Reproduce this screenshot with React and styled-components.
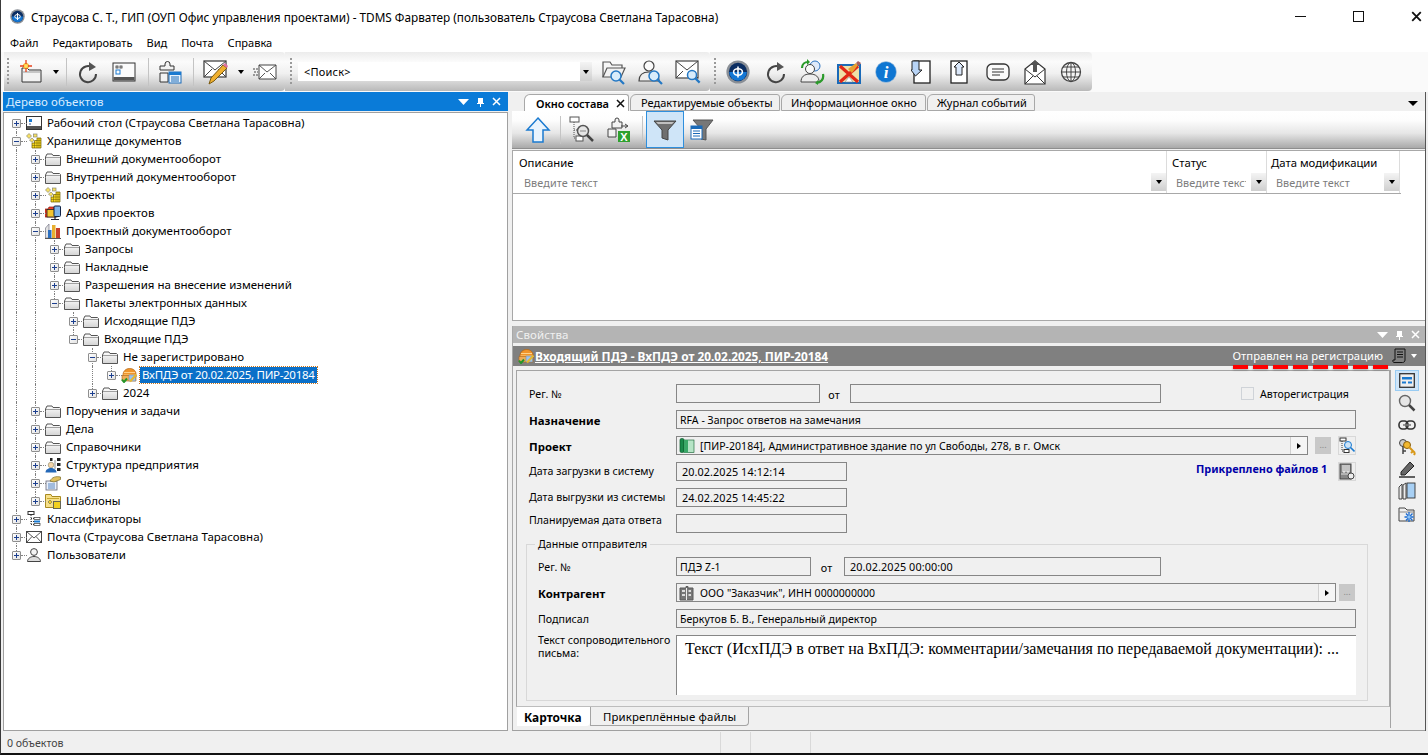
import React from 'react';
import styled, { createGlobalStyle } from 'styled-components';

const Global = createGlobalStyle`
  html, body { margin: 0; padding: 0; background: #fff; }
  * { box-sizing: border-box; }
  body { font-family: "Noto Sans", "Liberation Sans", sans-serif; font-size: 11.5px; color: #000; }
  fieldset { margin: 0; }
`;

const Win = styled.div`
  width: 1428px; height: 755px; background: #f6f6f6; display: flex; flex-direction: column;
  border-left: 1px solid #3a3a3a; border-bottom: 2px solid #111; overflow: hidden;
`;
const TitleBar = styled.div`
  height: 33px; background: #fff; display: flex; align-items: center; padding-left: 9px; flex: none; margin-right: -17px;
`;
const TitleText = styled.div`
  margin-left: 6px; font-size: 11.78px; flex: 1; white-space: nowrap;
`;
const WinBtn = styled.div`width: 58px; height: 33px; display: flex; align-items: center; justify-content: center;`;
const MenuBar = styled.div`height: 19px; background: #fff; display: flex; align-items: center; padding-left: 2px; flex: none;`;
const MenuItem = styled.div`padding: 0 7px; font-size: 11.05px; white-space: nowrap;`;
const ToolStrip = styled.div`height: 40px; display: flex; align-items: stretch; padding-left: 3px; flex: none; background: #fafafa;`;
const ToolBar = styled.div`
  display: flex; align-items: center; height: 39px; border-radius: 0 4px 4px 0;
  background: linear-gradient(#ececec 0%, #fbfbfb 25%, #f0f0f0 55%, #b9b9b9 100%);
`;
const Grip = styled.div`
  width: ${p => p.$w}px; height: 28px; flex: none; display: flex; justify-content: center;
  &::after { content: ""; width: 2px; height: 100%; background: repeating-linear-gradient(#9a9a9a 0 2px, transparent 2px 4px); }
`;
const Tool = styled.div`width: ${p => p.$w}px; height: 39px; flex: none; display: flex; align-items: center; justify-content: center;`;
const Sep = styled.div`
  width: ${p => p.$w}px; height: 28px; flex: none; display: flex; justify-content: center;
  &::after { content: ""; width: 1px; height: 100%; background: #c4c4c4; }
`;
const SearchBox = styled.div`
  width: 282px; height: 19px; background: #fff; flex: none; margin-left: 1px; padding-left: 6px; font-size: 11px;
  display: flex; align-items: center; letter-spacing: .2px;
`;
const DropBtn = styled.div`
  width: ${p => p.$w || 12}px; height: ${p => p.$h || 16}px; flex: none; display: flex; align-items: center; justify-content: center;
  background: ${p => p.$flat ? 'transparent' : 'linear-gradient(#f4f4f4,#cfcfcf)'};
  &::after {
    content: ""; border: ${p => p.$big ? 5 : 3}px solid transparent; border-top: ${p => p.$big ? 5 : 4}px solid ${p => p.$white ? '#fff' : '#000'}; border-bottom: 0;
  }
`;
const Main = styled.div`flex: 1; display: flex; min-height: 0; padding-left: 2px; background: #f0f0f0;`;
const LeftPanel = styled.div`width: 505px; flex: none; display: flex; flex-direction: column;`;
const DockHead = styled.div`
  height: ${p => p.$h}px; flex: none; display: flex; align-items: center; padding: 0 ${p => p.$pr || 7}px 0 3px;
  background: ${p => p.$bg}; color: ${p => p.$fg}; font-size: 11.5px; letter-spacing: .1px;
`;
const DockName = styled.div`flex: 1;`;
const DockBtns = styled.div`display: flex; align-items: center; gap: 7px;`;
const Tree = styled.div`
  flex: 1; background: #fff; border: 1px solid #a0a0a0; margin: 1px 0 0 0; padding: 1px 0 0 3px;
`;
const Row = styled.div`height: 18px; display: flex; align-items: center; white-space: nowrap;`;
const Indent = styled.div`
  width: 19px; height: 18px; flex: none; position: relative; display: flex; align-items: center; justify-content: center;
  &::before {
    content: ""; position: absolute; left: 9px; width: 0; border-left: 1px dotted #808080;
    top: ${p => p.$line === 'bottom' ? '9px' : '0'};
    bottom: ${p => p.$line === 'top' ? '9px' : '0'};
    display: ${p => p.$line ? 'block' : 'none'};
  }
  &::after {
    content: ""; position: absolute; left: 14px; top: 9px; width: 6px; border-top: 1px dotted #808080;
    display: ${p => p.$own ? 'block' : 'none'};
  }
`;
const Expander = styled.div`
  position: relative; z-index: 1; width: 9px; height: 9px; border: 1px solid #8f8f8f; border-radius: 1px; background: linear-gradient(135deg,#fff,#e2e2e2);
  display: flex; align-items: center; justify-content: center;
`;
const IconBox = styled.div`width: 16px; height: 16px; flex: none; display: flex; align-items: center; justify-content: center;`;
const NodeText = styled.div`
  margin-left: 3px; padding: 0 2px; height: 16px; line-height: 15px; font-size: 11.5px;
  ${p => p.$sel && 'background: #0a6fc8; color: #fff; outline: 1px dotted #c9741a; letter-spacing: -.28px;'}
`;
const Splitter = styled.div`width: 4px; flex: none;`;
const RightCol = styled.div`width: 914px; flex: none; display: flex; flex-direction: column; padding-top: 2px; border-right: 1px solid #555;`;
const TabBand = styled.div`height: 17px; flex: none; display: flex; align-items: flex-end; padding-left: 12px; padding-right: 6px;`;
const DocTab = styled.div`
  width: ${p => p.$w}px; height: 17px; flex: none; display: flex; align-items: center; padding-left: ${p => p.$pl}px; gap: 7px;
  font-size: 11px; white-space: nowrap; margin-right: 1px;
  background: ${p => p.$on ? '#fff' : '#f0f0f0'}; font-weight: ${p => p.$on ? 600 : 400}; letter-spacing: ${p => p.$on ? '-.1px' : '0'};
  border: 1px solid #a8a8a8; border-bottom: ${p => p.$on ? '0' : '1px solid #a8a8a8'}; border-radius: 6px 3px 0 0;
`;
const BandFill = styled.div`flex: 1;`;
const SubBar = styled.div`
  height: 38px; flex: none; display: flex; align-items: center; padding-left: 8px;
  background: linear-gradient(#fff 0%, #fdfdfd 25%, #e6e6e6 60%, #a9a9a9 100%); border-bottom: 1px solid #8e8e8e;
`;
const ActiveTool = styled.div`
  width: 38px; height: 37px; flex: none; display: flex; align-items: center; justify-content: center;
  background: #cfe5f8; border: 1px solid #2f8fdd;
`;
const GridBox = styled.div`height: 171px; flex: none; margin-top: 1px; background: #fff; border: 1px solid #a8a8a8; border-right: 0;`;
const GridHead = styled.div`display: flex; height: 43px; border-bottom: 1px solid #a8a8a8; width: 888px;`;
const GridCol = styled.div`
  width: ${p => p.$w}px; flex: none; border-right: 1px solid #dcdcdc; display: flex; flex-direction: column;
`;
const ColName = styled.div`height: 22px; padding: 5px 0 0 ${p => p.$pl}px; font-size: 11.3px; line-height: 14px;`;
const ColFilter = styled.div`height: 18px; display: flex; align-items: center; padding-left: ${p => p.$pl}px; color: #7c7c7c; font-size: 10.8px; letter-spacing: .1px;`;
const Placeholder = styled.div`flex: 1; overflow: hidden; white-space: nowrap; margin-right: 5px;`;
const VGap = styled.div`height: 5px; flex: none;`;
const Props = styled.div`flex: 1; display: flex; flex-direction: column; min-height: 0; border-bottom: 1px solid #a0a0a0; border-left: 1px solid #a8a8a8;`;
const ObjBar = styled.div`
  height: 20px; flex: none; margin-top: 3px; background: #808080; display: flex; align-items: center; color: #fff; padding: 0 3px 0 5px;
`;
const ObjName = styled.div`flex: 1; margin-left: 1px; font-weight: 700; text-decoration: underline; font-size: 11.85px;`;
const StateWrap = styled.div`position: relative; font-size: 11.25px; margin-right: 9px; height: 16px; line-height: 16px;`;
const RedDash = styled.div`
  position: absolute; left: 0; top: 17px; width: 155px; height: 4px;
  background: repeating-linear-gradient(90deg,#f00 0 15px,transparent 15px 20px);
  filter: drop-shadow(0 1px 1px rgba(0,0,0,.3));
`;
const PropBody = styled.div`flex: 1; display: flex; min-height: 0;`;
const CardCol = styled.div`width: 877px; flex: none; padding: 4px 0 0 3px; display: flex; flex-direction: column;`;
const Frame = styled.div`
  height: 337px; flex: none; border: 1px solid #a4a4a4; border-bottom: 1px solid #bdbdbd; padding: 13px 0 0 12px; display: flex; flex-direction: column; gap: 7px; overflow: hidden;
`;
const FRow = styled.div`height: ${p => p.$h || 19}px; flex: none; display: flex; align-items: ${p => p.$top ? 'flex-start' : 'center'};`;
const Label = styled.div`
  width: ${p => p.$w}px; flex: none; font-size: ${p => p.$b ? 11.4 : 10.65}px; line-height: 13px; font-weight: ${p => p.$b ? 700 : 400};
  padding-top: ${p => p.$pt || 0}px; margin-top: ${p => p.$mt || 0}px;
`;
const Field = styled.div`
  width: ${p => p.$w}px; height: 19px; flex: none; border: 1px solid #868686; background: #f0f0f0; display: flex; align-items: center;
  padding-left: ${p => p.$pl ?? 3}px; font-size: ${p => p.$num ? 10.8 : 10.5}px; white-space: nowrap; overflow: hidden; letter-spacing: ${p => p.$num ? '.1px' : '.05px'};
`;
const FieldText = styled.span`margin-left: 5px;`;
const Small = styled.div`width: ${p => p.$w}px; flex: none; text-align: center; font-size: 10.8px; padding-right: 2px; padding-top: 1px;`;
const Arrow = styled.div`
  width: 17px; height: 17px; flex: none; margin-left: auto; background: #f5f5f5; border-left: 1px solid #d0d0d0; display: flex; align-items: center; justify-content: center;
  &::after { content: ""; border: 3px solid transparent; border-left: 4px solid #000; border-right: 0; }
`;
const EllBtn = styled.div`
  width: 16px; height: 17px; flex: none; margin-left: ${p => p.$ml}px; background: #c8c8c8; color: #8a8a8a; font-size: 9px; line-height: 15px; text-align: center;
`;
const SquareBtn = styled.div`
  width: 18px; height: 19px; flex: none; margin-left: ${p => p.$ml}px; background: #efefef; border: 1px solid #d8d8d8; display: flex; align-items: center; justify-content: center;
`;
const Check = styled.div`width: 13px; height: 13px; flex: none; margin-left: 80px; border: 1px solid #cfd3d8; background: #f0f0f0;`;
const CheckText = styled.div`margin-left: 6px; font-size: 10.6px; padding-top: 1px;`;
const Attached = styled.div`width: 133px; flex: none; margin-left: 349px; color: #0000a8; font-weight: 700; font-size: 10.9px; white-space: nowrap; margin-top: -6px;`;
const Group = styled.fieldset`
  width: 842px; height: 163px; flex: none; margin: -2px 0 0 -3px; border: 1px solid #d8d8d8; padding: 7px 0 0 11px;
  display: flex; flex-direction: column; gap: 7px; min-width: 0;
`;
const Legend = styled.legend`margin-left: -3px; padding: 0 3px 0 3px; font-size: 10.65px; line-height: 12px;`;
const LetterBox = styled.div`
  width: 680px; height: 60px; flex: none; background: #fff; border: 1px solid #868686; border-bottom: 0; border-right: 0; padding: 4px 0 0 8px;
  font-family: "Liberation Serif", serif; font-size: 16.05px; line-height: 18px; white-space: nowrap; overflow: hidden;
`;
const CardTabs = styled.div`height: 19px; flex: none; display: flex; padding-left: 1px;`;
const CardTab = styled.div`
  width: ${p => p.$w}px; height: 19px; flex: none; display: flex; align-items: center; padding: 1px 0 0 ${p => p.$pl}px;
  background: ${p => p.$on ? '#fff' : '#f0f0f0'}; font-weight: ${p => p.$on ? 700 : 400}; font-size: ${p => p.$on ? 11.9 : 11.4}px; letter-spacing: ${p => p.$on ? 0 : '.15px'};
  border: ${p => p.$on ? '0' : '1px solid #a4a4a4'}; border-top: 0; border-radius: 0 0 4px 0;
`;
const Side = styled.div`flex: 1; border-left: 1px solid #a4a4a4; margin: 4px 0 2px 0; padding-left: 4px; display: flex; flex-direction: column; align-items: flex-start;`;
const SideBtn = styled.div`
  width: 24px; height: ${p => p.$h}px; flex: none; display: flex; align-items: center; justify-content: center;
  ${p => p.$on && 'background:#cfe5f8;border:1px solid #99ccf3;'}
`;
const Status = styled.div`height: 22px; flex: none; display: flex; align-items: center; font-size: 10.6px; color: #444; background: #f0f0f0; padding-top: 1px;`;
const StatusCell = styled.div`width: ${p => p.$w}px; height: 100%; flex: none; padding-left: 6px; display: flex; align-items: center; border-right: 1px solid #d9d9d9;`;

/* ---------- icons ---------- */
const Svg = styled.svg`display: block; flex: none;`;
const S = ({ w = 16, h = 16, vb, children }) => <Svg width={w} height={h} viewBox={vb || `0 0 ${w} ${h}`} fill="none">{children}</Svg>;
const Folder = () => <S><defs><linearGradient id="fg" x1="0" y1="0" x2="0" y2="1"><stop offset="0" stopColor="#fff" /><stop offset="1" stopColor="#d4d4d4" /></linearGradient></defs><path d="M.5 14.500V6l1.500-3h5l1 1.500h6.500l1 1v9z" fill="url(#fg)" stroke="#555" /><path d="M1 6.500h14" stroke="#a0a0a0" /></S>;
const Desktop = () => <S><rect x=".5" y="1.500" width="15" height="13" fill="#fdfdfd" stroke="#333" /><rect x="1" y="11" width="14" height="3" fill="#555" /><rect x="3" y="4" width="3" height="3" fill="#1a7ad0" /><rect x="3" y="8" width="2" height="2" fill="#9ac" /></S>;
const Storage = () => <S><path d="M6 15V10h2.500V7.500H11V5h4v10z" fill="#f7d820" stroke="#6a5c00" strokeWidth=".7" /><path d="M6 12.500h9M8.500 10h6.500M11 7.500h4M8.500 10v5M11 7.500V15M13 5v10" stroke="#6a5c00" strokeWidth=".5" /><path d="M3 .5l2.500 2.500L3 5.500.5 3z" fill="#f8e060" stroke="#887" strokeWidth=".7" /><path d="M6 5l2 2-2 2.500L3.500 7z" fill="#f8e060" stroke="#887" strokeWidth=".7" /><rect x="7.500" y="1" width="3.500" height="3" fill="#f8e060" stroke="#887" strokeWidth=".7" /></S>;
const Archive = () => <S><path d="M0 4h3l1-2h5v3h2v7H0z" fill="#f04028" stroke="#8a1a10" strokeWidth=".7" /><rect x="2" y="4.500" width="10" height="7.500" fill="#f4c430" stroke="#222" strokeWidth=".8" /><rect x="9" y="1" width="6.500" height="10.500" rx="1" fill="#7fb4ea" stroke="#124" /><path d="M6 14.500h8M10 11.500v3" stroke="#223" strokeWidth="1.200" /></S>;
const Bars = () => <S><path d="M.5 15V5L4 1v14z" fill="#e2e2e2" stroke="#778" strokeWidth=".7" /><rect x="3" y="7" width="3.500" height="8" fill="#2c6fc0" /><rect x="7" y="2" width="3.500" height="13" fill="#e8b030" /><rect x="11" y="5" width="4" height="10" fill="#c8402a" /><path d="M0 15.500h16" stroke="#555" /></S>;
const Pack = () => <S><path d="M2 8c0-4 3-6.500 6.500-6.500S15 3.500 15 7v3H2z" fill="#f0942a" stroke="#b06414" strokeWidth=".7" /><path d="M3 5.500h11M2.500 8h12.500" stroke="#ffd28a" /><path d="M1 8.500h14V14H1z" fill="#eeac58" stroke="#b06414" strokeWidth=".6" /><rect x="8" y="8" width="6.500" height="6" fill="#9cc4ee" stroke="#8a8a8a" strokeWidth=".6" /><path d="M15.500 7.500l-6.500 7" stroke="#e6b830" strokeWidth="2.200" /><path d="M1 12.500l2 2.500 3-3.500" stroke="#23962a" strokeWidth="2" /></S>;
const Org = () => <S><circle cx="6" cy="8" r="2.800" fill="#f3d3a8" stroke="#775" strokeWidth=".5" /><path d="M.5 15.500c0-3 3-4.500 5.500-4.500s5.500 1.500 5.500 4.500z" fill="#2468b8" /><path d="M5 1h2.500v3H5zM12 1h3.500v3H12zM12 6h3.500v3H12zM12 11h3.500v3H12z" fill="#222" /><path d="M10 3v9" stroke="#888" /></S>;
const Report = () => <S><rect x="1" y="6" width="11" height="9" fill="#e8f0fb" stroke="#667" strokeWidth=".8" /><path d="M3 9h7M3 11h7M3 13h7" stroke="#5a86c0" /><path d="M5 6c2-4 6-5 10.500-4v2.500L9 7z" fill="#e0c060" stroke="#7a6a20" strokeWidth=".7" /></S>;
const Templates = () => <S><path d="M.5 14.500V1.500h5.500l1 2h8.500v11z" fill="#f7e08a" stroke="#a88a20" /><path d="M2 5.500h12" stroke="#c8a830" /><rect x="8.500" y="8.500" width="7" height="7" fill="#f2d020" stroke="#665" /><path d="M5 7l2 2-2 2-2-2z" fill="#f5d020" stroke="#665" strokeWidth=".6" /></S>;
const Classif = () => <S><rect x="2" y=".5" width="6" height="3" fill="#fff" stroke="#333" /><path d="M5 4v10M5 7.500h3M5 10.500h3M5 13.500h3" stroke="#333" strokeDasharray="1 1" /><rect x="8" y="6.500" width="6" height="2" fill="#fff" stroke="#333" strokeWidth=".7" /><rect x="8" y="9.500" width="6" height="2" fill="#1a7ad0" /><rect x="8" y="12.500" width="6" height="2" fill="#fff" stroke="#333" strokeWidth=".7" /></S>;
const Mail = () => <S w={16} h={12}><rect x=".5" y=".5" width="15" height="11" fill="#fff" stroke="#444" /><path d="M.5.500L8 7l7.500-6.500M.5 11.500L6 5.500M15.500 11.500L10 5.500" stroke="#444" strokeWidth=".9" /></S>;
const User = () => <S><circle cx="8" cy="5" r="3.400" fill="#f4f4f4" stroke="#444" /><path d="M1.500 14.500c0-3 3-5 6.500-5s6.500 2 6.500 5z" fill="#ddd" stroke="#444" /></S>;
const Plus = () => <svg width="7" height="7" viewBox="0 0 7 7"><path d="M1 3.500h5M3.500 1v5" stroke="#1c3f8f" /></svg>;
const Minus = () => <svg width="7" height="7" viewBox="0 0 7 7"><path d="M1 3.500h5" stroke="#1c3f8f" /></svg>;
const Logo = ({ s = 15 }) => <S w={s} h={s} vb="0 0 30 30"><circle cx="15" cy="15" r="14.500" fill="#8a8f96" /><circle cx="15" cy="15" r="11.500" fill="#0b2e63" /><path d="M4 15a11 11 0 0 0 22 0z" fill="#1477d4" /><ellipse cx="15" cy="15" rx="5.500" ry="4" stroke="#fff" strokeWidth="2" /><path d="M15 8v14" stroke="#fff" strokeWidth="2" /></S>;
const Refresh = () => <S w={24} h={24}><path d="M16.500 7.500A8 8 0 1 0 20 14" stroke="#444" strokeWidth="2" /><path d="M13 2l7 5-7 4z" fill="#555" /></S>;
const NewFolder = () => <S w={24} h={24}><path d="M2 8h5l2 2h12v12H2z" fill="#f2f2f2" stroke="#333" /><path d="M2 12h19" stroke="#999" /><circle cx="6" cy="6" r="3" fill="#f5b020" /><path d="M6 0v12M0 6h12" stroke="#e8401a" strokeWidth="1.300" /><circle cx="6" cy="6" r="2" fill="#ffe060" /></S>;
const WindowIc = () => <S w={24} h={20}><rect x="1" y="1" width="22" height="18" fill="#fbfbfb" stroke="#333" /><rect x="1.500" y="15" width="21" height="3.500" fill="#555" /><rect x="4" y="4" width="2" height="2" stroke="#333" strokeWidth=".8" /><rect x="8" y="4" width="2" height="2" stroke="#333" strokeWidth=".8" /><rect x="4" y="8" width="4" height="4" stroke="#1a7ad0" /></S>;
const Puzzle = () => <S w={24} h={24}><path d="M2 6h5V4a2.500 2.500 0 0 1 5 0v2h4v4H2zM2 13h8v9H2z" fill="#f2f2f2" stroke="#333" /><rect x="11" y="12" width="12" height="11" fill="#e8f2fb" stroke="#1a6ab8" /><rect x="11" y="12" width="12" height="3" fill="#1a7ad0" /><path d="M13 17h8M13 19h8M13 21h8" stroke="#1a6ab8" /></S>;
const MailEdit = () => <S w={26} h={26}><rect x="1" y="2" width="22" height="16" fill="#fff" stroke="#444" strokeWidth="1.300" /><path d="M1 2l11 9 11-9M1 18l8-8M23 18l-8-8" stroke="#444" /><path d="M6 25l2-6L20 6l4 3L11 22z" fill="#f0b030" stroke="#7a5a10" /><path d="M20 6l2-2 3 3-1 2z" fill="#e070a0" /></S>;
const MailSend = () => <S w={24} h={18}><path d="M6 2h17v14H6z" fill="#fff" stroke="#444" /><path d="M6 2l8 7 9-7M6 16l6-6M23 16l-6-6" stroke="#444" strokeWidth=".9" /><path d="M0 6h5M1 9h4M0 12h5" stroke="#444" strokeDasharray="2 1" /></S>;
const Lens = ({ x, y, r = 5 }) => <g><circle cx={x} cy={y} r={r} fill="#d8ecfb" stroke="#2478c4" strokeWidth="1.500" /><path d={`M${x + r * .7} ${y + r * .7}l4.500 4.500`} stroke="#2478c4" strokeWidth="2.200" /></g>;
const FolderSearch = () => <S w={26} h={26}><path d="M2 18V3h7l2 3h10v5" stroke="#555" fill="#f6f6f6" strokeWidth="1.200" /><path d="M2 18l4-9h18l-4 9z" fill="#f2f2f2" stroke="#555" strokeWidth="1.200" /><Lens x={15} y={17} /></S>;
const UserSearch = () => <S w={26} h={26}><circle cx="11" cy="7" r="5" fill="#fafafa" stroke="#444" strokeWidth="1.200" /><path d="M1 22c0-6 4-9 10-9s10 3 10 9z" fill="#eee" stroke="#444" strokeWidth="1.200" /><Lens x={16} y={17} /></S>;
const MailSearch = () => <S w={26} h={24}><rect x="1" y="1" width="22" height="17" fill="#fff" stroke="#444" strokeWidth="1.200" /><path d="M1 1l11 9 11-9M1 18l7-7M23 18l-7-7" stroke="#444" /><Lens x={17} y={15} r={4.500} /></S>;
const UsersSync = () => <S w={26} h={26}><circle cx="16" cy="7" r="5" fill="#dfeafa" stroke="#2a72c0" /><circle cx="11" cy="10" r="4.500" fill="#fafafa" stroke="#444" /><path d="M2 23c0-5 3-8 9-8s9 3 9 8z" fill="#eee" stroke="#444" /><path d="M3 9c0-4 3-6 6-6" stroke="#2a9a2a" strokeWidth="2.200" /><path d="M8 0l3 3-3 3z" fill="#2a9a2a" /><path d="M24 15c1 5-2 8-6 9" stroke="#2a9a2a" strokeWidth="2.200" /><path d="M19 26l-3-2 3-3z" fill="#2a9a2a" /></S>;
const RedX = () => <S w={24} h={24}><rect x="1" y="5" width="22" height="18" fill="#efe0a8" stroke="#1a6ab8" strokeWidth="2" /><path d="M8 22l4-5 4 5z" fill="#fff" stroke="#888" strokeWidth=".6" /><path d="M3 6l18 16M21 6L3 22" stroke="#e02818" strokeWidth="3.200" /><path d="M11 9l8-6 2 2-6 8z" fill="#e8a030" /><path d="M19 3l2-2 3 2-2 3z" fill="#a86060" /></S>;
const Info = () => <S w={22} h={22}><circle cx="11" cy="11" r="10.500" fill="#0f76d2" stroke="#bcd" strokeWidth=".6" /><text x="11" y="17" textAnchor="middle" fontFamily="Liberation Serif" fontStyle="italic" fontWeight="700" fontSize="17" fill="#fff">i</text></S>;
const DocArrow = ({ up }) => <S w={20} h={24}><rect x="3" y="1" width="16" height="22" fill="#fff" stroke="#222" strokeWidth="1.300" />{up ? <path d="M11 2l5 5h-2v8H8V7H6z" fill="#dbe8fa" stroke="#222" /> : <path d="M1 1h7v9h3l-6.500 6L0 10h1z" fill="#b8d4f6" stroke="#222" />}</S>;
const Note = () => <S w={24} h={20}><rect x="1" y="2" width="22" height="16" rx="5" fill="#fafafa" stroke="#333" strokeWidth="1.300" /><path d="M6 7h12M6 10h12M6 13h8" stroke="#333" /></S>;
const MailUp = () => <S w={24} h={26}><path d="M2 10l10-8 10 8v15H2z" fill="#fff" stroke="#333" strokeWidth="1.200" /><path d="M2 10l10 8 10-8M2 25l8-8M22 25l-8-8" stroke="#333" /><path d="M12 1l5 5h-3v7h-4V6H7z" fill="#555" /></S>;
const Globe = () => <S w={22} h={22}><circle cx="11" cy="11" r="9.500" fill="#f4f4f4" stroke="#444" strokeWidth="1.300" /><ellipse cx="11" cy="11" rx="4.500" ry="9.500" stroke="#444" /><path d="M11 1.500v19M1.500 11h19M3 6h16M3 16h16" stroke="#444" /></S>;
const HomeUp = () => <S w={26} h={28}><path d="M13 2l11 12h-6v12H8V14H2z" fill="#eaf4fd" stroke="#1a7ad0" strokeWidth="1.500" /></S>;
const TreeSearch = () => <S w={26} h={28}><rect x="1" y="1" width="9" height="5" fill="#fff" stroke="#555" /><path d="M5 6v16M5 14h3M5 22h3" stroke="#555" strokeDasharray="1 1" /><rect x="7" y="20" width="7" height="5" fill="#fff" stroke="#555" /><circle cx="14" cy="15" r="5.500" fill="#e6e6e6" stroke="#555" strokeWidth="1.500" /><path d="M11 15h6" stroke="#888" /><path d="M18 19l6 6" stroke="#444" strokeWidth="2.500" /></S>;
const PuzzleX = () => <S w={24} h={26}><path d="M5 5h3V3a2 2 0 0 1 4 0v2h3v6H5zM1 12h8v8H1z" fill="#f2f2f2" stroke="#444" /><path d="M14 9h6M18 7l3 2-3 2" stroke="#444" /><rect x="11" y="14" width="12" height="11" fill="#2ea02e" /><text x="17" y="24" textAnchor="middle" fontFamily="Liberation Sans" fontWeight="700" fontSize="11" fill="#fff">X</text></S>;
const Funnel = () => <S w={24} h={24}><path d="M1 3h22l-8 9v10l-6-2v-8z" fill="#6f6f6f" stroke="#444" /><path d="M3 4h18l-2 2H5z" fill="#c0c0c0" /></S>;
const FunnelList = () => <S w={24} h={24}><path d="M3 2h20l-7 9v11l-5-1V11z" fill="#777" stroke="#555" /><rect x="1" y="8" width="11" height="13" fill="#fff" stroke="#1a6ab8" /><rect x="1" y="8" width="11" height="3" fill="#1a6ab8" /><path d="M3 13h7M3 15.500h7M3 18h7" stroke="#1a6ab8" /></S>;
const DownW = () => <svg width="11" height="6" viewBox="0 0 11 6"><path d="M0 0h11L5.500 6z" fill="#fff" /></svg>;
const PinW = () => <svg width="9" height="10" viewBox="0 0 9 10"><path d="M2 1h5v5h1v1H5v3H4V7H1V6h1z" fill="#fff" /></svg>;
const XW = ({ c = '#fff', s = 9 }) => <svg width={s} height={s} viewBox="0 0 9 9"><path d="M1 1l7 7M8 1L1 8" stroke={c} strokeWidth="1.500" /></svg>;
const ProjBook = () => <S><rect x="1" y="0.500" width="4" height="14" rx="1.500" fill="#1a8a4a" stroke="#0a5a2a" strokeWidth=".7" /><rect x="5" y="2" width="10" height="12.500" fill="#b6e4c6" stroke="#0a5a2a" strokeWidth=".6" /><rect x="5" y="2" width="4" height="12.500" fill="#3aa868" /></S>;
const Building = () => <S><path d="M1 3h6V1.500h2V3h5v12H1z" fill="#777" stroke="#5a5a5a" /><path d="M7.500 3v12" stroke="#eee" /><path d="M3 5h3v2H3zM9.500 5H12v2H9.500zM3 9h3v2H3zM9.500 9H12v2H9.500z" fill="#ddd" /></S>;
const ScrollIc = () => <S w={14} h={16}><path d="M3 1h10v11c0 1.500-1 2.500-2.500 2.500H2c-1 0-1.500-1.500-1-2.500h2z" fill="#808080" stroke="#111" /><path d="M5 4h6M5 6.500h6M5 9h6" stroke="#111" /></S>;
const TreeLens = () => <S w={16} h={17}><rect x="1" y="1" width="6" height="3" fill="#fff" stroke="#333" /><path d="M3 4v10h3" stroke="#333" strokeDasharray="1 1" /><rect x="5" y="12.500" width="5" height="3" fill="#fff" stroke="#333" /><circle cx="9" cy="8" r="3.500" fill="#cde4f8" stroke="#1a7ad0" /><path d="M11.500 10.500l4 4" stroke="#1a7ad0" strokeWidth="1.600" /></S>;
const Cabinet = () => <S w={16} h={17}><rect x="1" y="1" width="11" height="15" fill="#888" stroke="#444" /><path d="M4 2v7h2V2M8 2v7h2V2" stroke="#fff" /><path d="M2 11h9" stroke="#ddd" /><circle cx="12" cy="13" r="3" fill="#eee" stroke="#444" /></S>;
const SideForm = () => <S w={16} h={15}><rect x=".7" y=".7" width="14.600" height="13.600" fill="#eee" stroke="#333" strokeWidth="1.300" /><rect x="3" y="4" width="10" height="2.500" fill="#1a7ad0" /><rect x="3" y="8.500" width="4" height="2" fill="#1a7ad0" /><rect x="9" y="8.500" width="4" height="2" fill="#1a7ad0" /></S>;
const SideLens = () => <S w={18} h={18}><circle cx="7" cy="7" r="5.500" fill="#e6e6e6" stroke="#666" strokeWidth="1.400" /><path d="M11 11l5.500 5.500" stroke="#444" strokeWidth="2.500" /></S>;
const SideLink = () => <S w={18} h={10}><rect x="1" y="1" width="9" height="8" rx="3.500" stroke="#333" strokeWidth="1.600" /><rect x="8" y="1" width="9" height="8" rx="3.500" stroke="#333" strokeWidth="1.600" /><path d="M5 5h8" stroke="#777" strokeWidth="1.500" /></S>;
const SideKey = () => <S w={18} h={18}><circle cx="5" cy="5" r="3.500" fill="#ccc" stroke="#444" /><path d="M5 8v8M5 13h3" stroke="#444" strokeWidth="1.500" /><circle cx="9" cy="7" r="3.500" fill="#f2b830" stroke="#8a6010" /><path d="M11 9l6 6M15 13l-2 2M17 15l-1 2" stroke="#d89818" strokeWidth="2" /></S>;
const SidePen = () => <S w={18} h={18}><path d="M3 12L12 2l4 4-9 9H3z" fill="#666" stroke="#222" /><path d="M1 17h16" stroke="#222" strokeWidth="1.400" /></S>;
const SideBooks = () => <S w={18} h={18}><path d="M1 5l3-3v15H1zM5 3l3-2v16H5z" fill="#eee" stroke="#333" strokeWidth=".9" /><rect x="9" y="1" width="8" height="15" fill="#a8d0f4" stroke="#333" strokeWidth=".9" /></S>;
const SideFolder = () => <S w={18} h={18}><path d="M1 16V3h6l2 2h7v11z" fill="#f0f0f0" stroke="#444" /><path d="M1 7h15" stroke="#888" /><path d="M11 7v10M6.500 12h9M8 8.500l6.500 7M14.500 8.500l-6.500 7" stroke="#1a6ad0" strokeWidth="1.300" /><circle cx="11" cy="12" r="1.800" fill="#8cc4f8" /></S>;

/* ---------- data ---------- */
const nodes = [
  [0, 'p', Desktop, 'Рабочий стол (Страусова Светлана Тарасовна)', ['bottom']],
  [0, 'm', Storage, 'Хранилище документов', ['full']],
  [1, 'p', Folder, 'Внешний документооборот', ['full', 'full']],
  [1, 'p', Folder, 'Внутренний документооборот', ['full', 'full']],
  [1, 'p', Storage, 'Проекты', ['full', 'full']],
  [1, 'p', Archive, 'Архив проектов', ['full', 'full']],
  [1, 'm', Bars, 'Проектный документооборот', ['full', 'full']],
  [2, 'p', Folder, 'Запросы', ['full', 'full', 'full']],
  [2, 'p', Folder, 'Накладные', ['full', 'full', 'full']],
  [2, 'p', Folder, 'Разрешения на внесение изменений', ['full', 'full', 'full']],
  [2, 'm', Folder, 'Пакеты электронных данных', ['full', 'full', 'top']],
  [3, 'p', Folder, 'Исходящие ПДЭ', ['full', 'full', null, 'full']],
  [3, 'm', Folder, 'Входящие ПДЭ', ['full', 'full', null, 'top']],
  [4, 'm', Folder, 'Не зарегистрировано', ['full', 'full', null, null, 'full']],
  [5, 'p', Pack, 'ВхПДЭ от 20.02.2025, ПИР-20184', ['full', 'full', null, null, 'full', 'top'], true],
  [4, 'p', Folder, '2024', ['full', 'full', null, null, 'top']],
  [1, 'p', Folder, 'Поручения и задачи', ['full', 'full']],
  [1, 'p', Folder, 'Дела', ['full', 'full']],
  [1, 'p', Folder, 'Справочники', ['full', 'full']],
  [1, 'p', Org, 'Структура предприятия', ['full', 'full']],
  [1, 'p', Report, 'Отчеты', ['full', 'full']],
  [1, 'p', Templates, 'Шаблоны', ['full', 'top']],
  [0, 'p', Classif, 'Классификаторы', ['full']],
  [0, 'p', Mail, 'Почта (Страусова Светлана Тарасовна)', ['full']],
  [0, 'p', User, 'Пользователи', ['top']],
];

const TreeRow = ({ d }) => {
  const [level, sign, Ic, text, lines, sel] = d;
  const cells = [];
  for (let i = 0; i <= level; i++) {
    cells.push(
      <Indent key={i} $line={lines[i]} $own={i === level}>
        {i === level && <Expander>{sign === 'p' ? <Plus /> : <Minus />}</Expander>}
      </Indent>
    );
  }
  return (
    <Row>
      {cells}
      <IconBox><Ic /></IconBox>
      <NodeText $sel={sel}>{text}</NodeText>
    </Row>
  );
};

export default function App() {
  return (
    <Win>
      <Global />
      <TitleBar>
        <Logo />
        <TitleText>Страусова С. Т., ГИП (ОУП Офис управления проектами) - TDMS Фарватер (пользователь Страусова Светлана Тарасовна)</TitleText>
        <WinBtn><svg width="11" height="1"><path d="M0 .5h11" stroke="#111" /></svg></WinBtn>
        <WinBtn><svg width="11" height="11"><rect x=".5" y=".5" width="10" height="10" fill="none" stroke="#111" /></svg></WinBtn>
        <WinBtn><XW c="#111" s={11} /></WinBtn>
      </TitleBar>
      <MenuBar>
        {['Файл', 'Редактировать', 'Вид', 'Почта', 'Справка'].map(m => <MenuItem key={m}>{m}</MenuItem>)}
      </MenuBar>
      <ToolStrip>
        <ToolBar>
          <Grip $w={8} />
          <Tool $w={40}><NewFolder /></Tool>
          <Tool $w={8}><DropBtn $flat $w={8} /></Tool>
          <Sep $w={12} />
          <Tool $w={32}><Refresh /></Tool>
          <Tool $w={40}><WindowIc /></Tool>
          <Sep $w={8} />
          <Tool $w={36}><Puzzle /></Tool>
          <Sep $w={10} />
          <Tool $w={36}><MailEdit /></Tool>
          <Tool $w={14}><DropBtn $flat $w={8} /></Tool>
          <Tool $w={34}><MailSend /></Tool>
          <Tool $w={3} />
        </ToolBar>
        <ToolBar>
          <Grip $w={12} />
          <SearchBox>&lt;Поиск&gt;</SearchBox>
          <DropBtn $w={12} $h={19} />
          <Tool $w={44}><FolderSearch /></Tool>
          <Tool $w={30}><UserSearch /></Tool>
          <Tool $w={44}><MailSearch /></Tool>
        </ToolBar>
        <ToolBar>
          <Grip $w={10} />
          <Tool $w={36}><Logo s={24} /></Tool>
          <Tool $w={40}><Refresh /></Tool>
          <Tool $w={32}><UsersSync /></Tool>
          <Tool $w={42}><RedX /></Tool>
          <Tool $w={32}><Info /></Tool>
          <Tool $w={38}><DocArrow /></Tool>
          <Tool $w={36}><DocArrow up /></Tool>
          <Tool $w={44}><Note /></Tool>
          <Tool $w={30}><MailUp /></Tool>
          <Tool $w={42}><Globe /></Tool>
        </ToolBar>
      </ToolStrip>
      <Main>
        <LeftPanel>
          <DockHead $h={19} $bg="#0a7bd8" $fg="#d8ecff">
            <DockName>Дерево объектов</DockName>
            <DockBtns><DownW /><PinW /><XW /></DockBtns>
          </DockHead>
          <Tree>
            {nodes.map(n => <TreeRow key={n[3]} d={n} />)}
          </Tree>
        </LeftPanel>
        <Splitter />
        <RightCol>
          <TabBand>
            <DocTab $w={105} $pl={11} $on>Окно состава <XW c="#111" s={9} /></DocTab>
            <DocTab $w={150} $pl={10}>Редактируемые объекты</DocTab>
            <DocTab $w={145} $pl={9}>Информационное окно</DocTab>
            <DocTab $w={108} $pl={9}>Журнал событий</DocTab>
            <BandFill />
            <DropBtn $flat $big $w={12} />
          </TabBand>
          <SubBar>
            <Tool $w={36}><HomeUp /></Tool>
            <Sep $w={8} />
            <Tool $w={36}><TreeSearch /></Tool>
            <Tool $w={38}><PuzzleX /></Tool>
            <Sep $w={8} />
            <ActiveTool><Funnel /></ActiveTool>
            <Tool $w={36}><FunnelList /></Tool>
          </SubBar>
          <GridBox>
            <GridHead>
              <GridCol $w={654}>
                <ColName $pl={6}>Описание</ColName>
                <ColFilter $pl={11}><Placeholder>Введите текст</Placeholder><DropBtn $w={15} $h={18} /></ColFilter>
              </GridCol>
              <GridCol $w={100}>
                <ColName $pl={5}>Статус</ColName>
                <ColFilter $pl={9}><Placeholder>Введите текст</Placeholder><DropBtn $w={15} $h={18} /></ColFilter>
              </GridCol>
              <GridCol $w={133}>
                <ColName $pl={4}>Дата модификации</ColName>
                <ColFilter $pl={9}><Placeholder>Введите текст</Placeholder><DropBtn $w={15} $h={18} /></ColFilter>
              </GridCol>
            </GridHead>
          </GridBox>
          <VGap />
          <Props>
            <DockHead $h={17} $bg="#b4b4b4" $fg="#f0f0f0" $pr={5}>
              <DockName>Свойства</DockName>
              <DockBtns><DownW /><PinW /><XW /></DockBtns>
            </DockHead>
            <ObjBar>
              <Pack />
              <ObjName>Входящий ПДЭ - ВхПДЭ от 20.02.2025, ПИР-20184</ObjName>
              <StateWrap>Отправлен на регистрацию<RedDash /></StateWrap>
              <ScrollIc />
              <DropBtn $flat $white $w={16} />
            </ObjBar>
            <PropBody>
              <CardCol>
                <Frame>
                  <FRow>
                    <Label $w={147} $pt={2}>Рег. №</Label>
                    <Field $w={144} />
                    <Small $w={30}>от</Small>
                    <Field $w={311} />
                    <Check />
                    <CheckText>Авторегистрация</CheckText>
                  </FRow>
                  <FRow>
                    <Label $w={147} $b $pt={2}>Назначение</Label>
                    <Field $w={680}>RFA - Запрос ответов на замечания</Field>
                  </FRow>
                  <FRow>
                    <Label $w={147} $b $pt={2}>Проект</Label>
                    <Field $w={632} $pl={2}><ProjBook /><FieldText>[ПИР-20184], Административное здание по ул Свободы, 278, в г. Омск</FieldText><Arrow /></Field>
                    <EllBtn $ml={7}>...</EllBtn>
                    <SquareBtn $ml={7}><TreeLens /></SquareBtn>
                  </FRow>
                  <FRow>
                    <Label $w={147}>Дата загрузки в систему</Label>
                    <Field $w={171} $pl={5} $num>20.02.2025 14:12:14</Field>
                    <Attached>Прикреплено файлов 1</Attached>
                    <SquareBtn $ml={9}><Cabinet /></SquareBtn>
                  </FRow>
                  <FRow>
                    <Label $w={147}>Дата выгрузки из системы</Label>
                    <Field $w={171} $pl={5} $num>24.02.2025 14:45:22</Field>
                  </FRow>
                  <FRow>
                    <Label $w={147} $mt={-6}>Планируемая дата ответа</Label>
                    <Field $w={171} />
                  </FRow>
                  <Group>
                    <Legend>Данные отправителя</Legend>
                    <FRow>
                      <Label $w={138} $pt={1}>Рег. №</Label>
                      <Field $w={135}>ПДЭ Z-1</Field>
                      <Small $w={33}>от</Small>
                      <Field $w={317} $pl={5} $num>20.02.2025 00:00:00</Field>
                    </FRow>
                    <FRow>
                      <Label $w={138} $b $pt={2}>Контрагент</Label>
                      <Field $w={660} $pl={2}><Building /><FieldText>ООО "Заказчик", ИНН 0000000000</FieldText><Arrow /></Field>
                      <EllBtn $ml={3}>...</EllBtn>
                    </FRow>
                    <FRow>
                      <Label $w={138} $pt={1}>Подписал</Label>
                      <Field $w={680}>Беркутов Б. В., Генеральный директор</Field>
                    </FRow>
                    <FRow $h={60} $top>
                      <Label $w={138} $mt={-1}>Текст сопроводительного письма:</Label>
                      <LetterBox>Текст (ИсхПДЭ в ответ на ВхПДЭ: комментарии/замечания по передаваемой документации): ...</LetterBox>
                    </FRow>
                  </Group>
                </Frame>
                <CardTabs>
                  <CardTab $w={73} $pl={7} $on>Карточка</CardTab>
                  <CardTab $w={159} $pl={12}>Прикреплённые файлы</CardTab>
                </CardTabs>
              </CardCol>
              <Side>
                <SideBtn $h={21} $on><SideForm /></SideBtn>
                <SideBtn $h={24}><SideLens /></SideBtn>
                <SideBtn $h={20}><SideLink /></SideBtn>
                <SideBtn $h={24}><SideKey /></SideBtn>
                <SideBtn $h={20}><SidePen /></SideBtn>
                <SideBtn $h={24}><SideBooks /></SideBtn>
                <SideBtn $h={22}><SideFolder /></SideBtn>
              </Side>
            </PropBody>
          </Props>
        </RightCol>
      </Main>
      <Status>
        <StatusCell $w={720}>0 объектов</StatusCell>
        <StatusCell $w={30} />
        <StatusCell $w={60} />
      </Status>
    </Win>
  );
}
